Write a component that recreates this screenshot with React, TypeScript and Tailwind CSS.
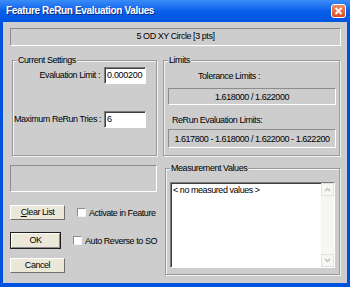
const ui = "font-['Liberation_Sans',Arial,sans-serif]";

function GroupBox({ label, className, children }: { label: string; className: string; children?: React.ReactNode }) {
  return (
    <div className={`relative border border-[#9a9a9a] shadow-[inset_1px_1px_0_#f4f4f4,1px_1px_0_#f4f4f4] ${className}`}>
      <span className="absolute -top-[7px] left-[4px] bg-[#cdcdcd] px-[1px] text-[9px] tracking-[-0.45px] leading-[12px] whitespace-nowrap">
        {label}
      </span>
      {children}
    </div>
  );
}

function Sunken({ className, children }: { className: string; children?: React.ReactNode }) {
  return (
    <div className={`border border-t-[#8c8c8c] border-l-[#8c8c8c] border-b-white border-r-white ${className}`}>
      {children}
    </div>
  );
}

function TextBox({ value }: { value: string }) {
  return (
    <div className="h-[17px] w-[42px] bg-white border border-t-[#7c7c7c] border-l-[#7c7c7c] border-b-white border-r-white shadow-[inset_1px_1px_0_#404040] pl-[2px] text-[9px] tracking-[-0.3px] leading-[15px]">
      {value}
    </div>
  );
}

function Button({ children, isDefault }: { children: React.ReactNode; isDefault?: boolean }) {
  if (isDefault) {
    return (
      <div className="w-[55px] h-[17px] border border-[#202020] flex">
        <div className="flex-1 bg-[#ebe8da] border border-white border-r-[#8a8a8a] border-b-[#8a8a8a] flex items-center justify-center">
          {children}
        </div>
      </div>
    );
  }
  return (
    <div className="w-[55px] h-[15px] bg-[#ebe8da] border border-white border-r-[#6e6e6e] border-b-[#6e6e6e] flex items-center justify-center">
      {children}
    </div>
  );
}

function CheckBox({ label }: { label: string }) {
  return (
    <div className="flex items-center gap-[3px]">
      <div className="w-[9px] h-[9px] bg-white border border-t-[#8c8c8c] border-l-[#8c8c8c] border-b-[#f4f4f4] border-r-[#f4f4f4]" />
      <span className="leading-[12px] whitespace-nowrap">{label}</span>
    </div>
  );
}

export default function App() {
  return (
    <div className={`w-[350px] h-[287px] bg-[#0052de] flex flex-col text-black ${ui}`}>
      {/* title bar */}
      <div className="h-[22px] flex items-center justify-between pl-[6px] pr-[4px] bg-linear-to-b from-[#3a8cf7] via-[#0a5fea] to-[#0054e2]">
        <span className="text-white font-bold text-[10px] tracking-[-0.35px] leading-[14px] [text-shadow:1px_1px_0_#0a2a80]">
          Feature ReRun Evaluation Values
        </span>
        <div className="w-[15px] h-[14px] rounded-[3px] border border-white bg-linear-to-b from-[#f08a64] to-[#d94a22] flex items-center justify-center">
          <svg width="9" height="8" viewBox="0 0 9 8">
            <path d="M1.5 1 L7.5 7 M7.5 1 L1.5 7" stroke="white" strokeWidth="1.8" />
          </svg>
        </div>
      </div>

      {/* dialog body */}
      <div className="flex-1 mx-[3px] mb-[4px] bg-[#cdcdcd] pt-[6px] pl-[7px] text-[9px] tracking-[-0.45px]">
        <Sunken className="w-[331px] h-[18px] flex items-center justify-center">
          5 OD XY Circle [3 pts]
        </Sunken>

        <div className="flex mt-[14px]">
          <GroupBox label="Current Settings" className="ml-[2px] w-[145px] h-[96px]">
            <div className="grid grid-cols-[86px_42px] gap-x-[4px] gap-y-[27px] items-center pl-[1px] pt-[6px]">
              <span className="text-right whitespace-nowrap">Evaluation Limit :</span>
              <TextBox value="0.000200" />
              <span className="text-right whitespace-nowrap">Maximum ReRun Tries :</span>
              <TextBox value="6" />
            </div>
          </GroupBox>

          <GroupBox label="Limits" className="ml-[6px] w-[177px] h-[96px]">
            <div className="flex flex-col pt-[9px] pl-[4px] pr-[3px] leading-[12px]">
              <span className="pl-[30px]">Tolerance Limits :</span>
              <Sunken className="mt-[6px] h-[17px] flex items-center justify-center">1.618000 / 1.622000</Sunken>
              <span className="mt-[9px] pl-[4px]">ReRun Evaluation Limits:</span>
              <Sunken className="mt-[3px] h-[19px] flex items-center justify-center whitespace-nowrap">
                1.617800 - 1.618000 / 1.622000 - 1.622200
              </Sunken>
            </div>
          </GroupBox>
        </div>

        <div className="flex items-start mt-[9px]">
          <div className="w-[147px] flex flex-col">
            <Sunken className="h-[27px]" />
            <div className="flex items-center gap-[12px] mt-[13px]">
              <Button>
                <span><span className="underline">C</span>lear List</span>
              </Button>
              <CheckBox label="Activate in Feature" />
            </div>
            <div className="flex items-center gap-[12px] mt-[12px]">
              <Button isDefault>OK</Button>
              <CheckBox label="Auto Reverse to SO" />
            </div>
            <div className="mt-[9px]">
              <Button>Cancel</Button>
            </div>
          </div>

          <GroupBox label="Measurement Values" className="ml-[8px] mt-[3px] w-[175px] h-[107px]">
            <div className="pt-[13px] px-[4px]">
              <div className="h-[86px] bg-white border border-t-[#7c7c7c] border-l-[#7c7c7c] border-b-white border-r-white shadow-[inset_1px_1px_0_#404040] flex">
                <div className="flex-1 pl-[2px] pt-[1px] leading-[12px]">&lt; no measured values &gt;</div>
                <div className="w-[13px] bg-[#f6f6f2] flex flex-col justify-between">
                  <div className="h-[13px] border border-[#e2e2dc] flex items-center justify-center">
                    <svg width="7" height="5" viewBox="0 0 7 5">
                      <path d="M1 4 L3.5 1.5 L6 4" stroke="#c0c0b8" strokeWidth="1.3" fill="none" />
                    </svg>
                  </div>
                  <div className="h-[13px] border border-[#e2e2dc] flex items-center justify-center">
                    <svg width="7" height="5" viewBox="0 0 7 5">
                      <path d="M1 1 L3.5 3.5 L6 1" stroke="#c0c0b8" strokeWidth="1.3" fill="none" />
                    </svg>
                  </div>
                </div>
              </div>
            </div>
          </GroupBox>
        </div>
      </div>
    </div>
  );
}
